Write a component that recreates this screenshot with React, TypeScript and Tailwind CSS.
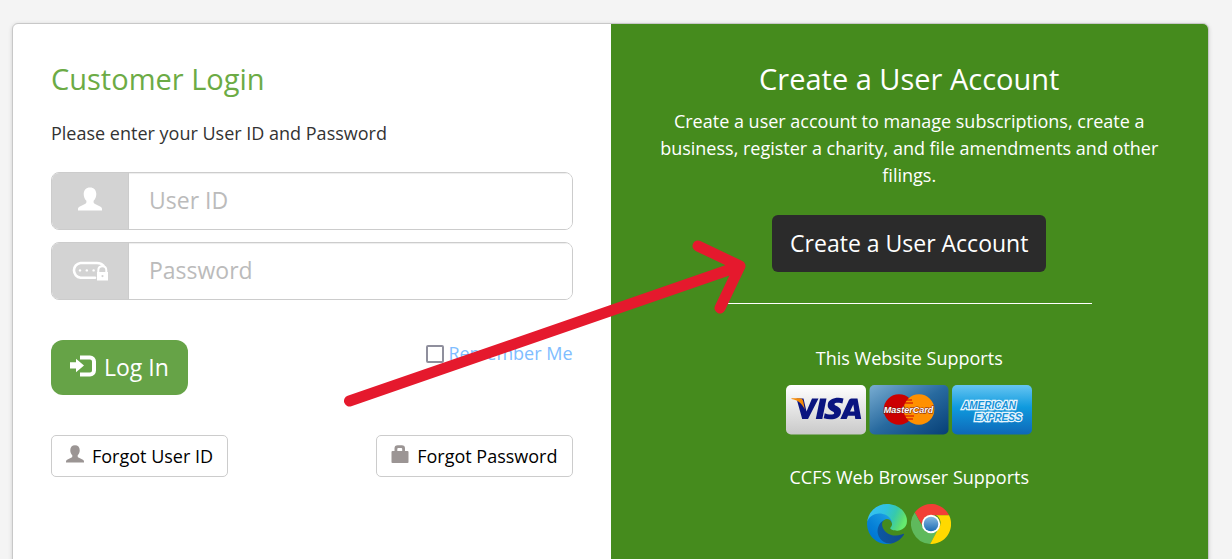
import React from "react";

type IconProps = { className?: string };

function UserIcon({ className }: IconProps) {
  return (
    <svg viewBox="0 0 24 24" className={className} fill="currentColor" aria-hidden="true">
      <path d="M12 0.4C15.9 0.4 18.3 3 18.3 7C18.3 9.6 17.300 12.300 15.600 13.800V15.200C15.600 15.900 15.900 16.300 16.600 16.700L22.600 19.800C23.500 20.300 24 21 24 22V23.400H0V22C0 21 0.500 20.300 1.400 19.800L7.400 16.700C8.100 16.300 8.400 15.900 8.400 15.200V13.800C6.700 12.300 5.700 9.600 5.700 7C5.700 3 8.100 0.400 12 0.400Z" />
    </svg>
  );
}

function PasswordIcon({ className }: IconProps) {
  return (
    <svg viewBox="0 0 36 20" className={className} fill="none" aria-hidden="true">
      <path
        d="M23 16.700H8.500A7.400 7.400 0 0 1 8.500 2H25C28 2 30 3.100 31.400 4.700"
        stroke="currentColor"
        strokeWidth="2.600"
        strokeLinecap="round"
      />
      <circle cx="8" cy="9.400" r="1.200" fill="currentColor" />
      <circle cx="14.800" cy="9.400" r="1.200" fill="currentColor" />
      <circle cx="21.600" cy="9.400" r="1.200" fill="currentColor" />
      <path d="M26.300 11V9.200C26.300 6.800 28 5.200 30.300 5.200S34.300 6.800 34.300 9.200V11" stroke="currentColor" strokeWidth="2" />
      <path
        fillRule="evenodd"
        d="M25 11H36V19.400H25V11ZM30.500 14A1.100 1.100 0 1 0 30.500 16.200A1.100 1.100 0 1 0 30.500 14Z"
        fill="currentColor"
      />
    </svg>
  );
}

function LogInIcon({ className }: IconProps) {
  return (
    <svg viewBox="0 0 26 22" className={className} fill="currentColor" aria-hidden="true">
      <path d="M10 0.500H20A6 6 0 0 1 26 6.500V15.500A6 6 0 0 1 20 21.500H10V17.500H20A2 2 0 0 0 22 15.500V6.500A2 2 0 0 0 20 4.500H10Z" />
      <path d="M0 7.300H6V3.800L14 10.500L6 17.200V13.500H0Z" />
    </svg>
  );
}

function LockIcon({ className }: IconProps) {
  return (
    <svg viewBox="0 0 18 18" className={className} fill="currentColor" aria-hidden="true">
      <path
        fillRule="evenodd"
        d="M3.500 6V3.500A3.200 3.200 0 0 1 6.700 0.300H10.800A3.200 3.200 0 0 1 14 3.500V6H16.500Q17.500 6 17.500 7V17.200Q17.500 18 16.500 18H1.500Q0.500 18 0.500 17.200V7Q0.500 6 1.500 6ZM6.300 6H11.200V4Q11.200 3 10.200 3H7.300Q6.300 3 6.300 4Z"
      />
    </svg>
  );
}

function VisaLogo() {
  return (
    <svg viewBox="0 0 80 50" className="h-[50px] w-20" role="img" aria-label="Visa">
      <defs>
        <linearGradient id="visa-bg" x1="0" y1="0" x2="0" y2="1">
          <stop offset="0" stopColor="#fff" />
          <stop offset="1" stopColor="#c9c9c9" />
        </linearGradient>
      </defs>
      <rect width="80" height="49.500" rx="5" fill="url(#visa-bg)" />
      <path fill="#0a1480" d="M10.500 13.500H17.500L20.500 26.500L26 13.500H32.500L22 34H16.200Z" />
      <path fill="#0a1480" d="M34 13.500H40.500L36.300 34H29.800Z" />
      <path
        fill="#0a1480"
        d="M57.500 13.600L56.400 18.600C54.500 17.800 48.600 17.100 48.400 19.300C48.300 21 55.700 21.600 55 27.300C54.200 34.700 44.500 35.500 37.700 33.300L38.800 28.300C41.200 29.500 47.600 30.500 48.200 28.200C48.500 26.200 41.300 25.600 41.700 20C42.200 13.100 51.500 11.800 57.500 13.600Z"
      />
      <path
        fill="#0a1480"
        fillRule="evenodd"
        d="M65.300 13.500H71.500L75.200 34H69.300L68.800 30.800H62L60.600 34H54.300L62.800 15.300Q63.600 13.500 65.300 13.500ZM67.300 19.500L64 26.600H68.400Z"
      />
      <path fill="#f58a07" d="M5.500 13.300H13.500Q16.500 13.300 17.200 16.300L18.800 24.500C16.500 19 12 15.300 5.500 14.100Z" />
    </svg>
  );
}

function MasterCardLogo() {
  return (
    <svg viewBox="0 0 80 50" className="h-[50px] w-20" role="img" aria-label="MasterCard">
      <defs>
        <linearGradient id="mc-bg" x1="0" y1="0" x2="1" y2="1">
          <stop offset="0" stopColor="#79add2" />
          <stop offset="0.500" stopColor="#286a9f" />
          <stop offset="1" stopColor="#063f76" />
        </linearGradient>
      </defs>
      <rect x="0.500" width="79" height="49.500" rx="5" fill="url(#mc-bg)" />
      <circle cx="30" cy="24.500" r="15.300" fill="#cc0000" />
      <circle cx="50" cy="24.500" r="15.300" fill="#ff9000" />
      <path d="M37 15H43M36 18H44M36 31H45M37 34H44" stroke="#cc0000" strokeWidth="1.200" />
      <text
        x="39.500"
        y="28"
        textAnchor="middle"
        fontFamily="Liberation Sans Narrow, Liberation Sans, sans-serif"
        fontSize="9"
        fontWeight="700"
        fontStyle="italic"
        fill="#fff"
        stroke="#7a1c10"
        strokeWidth="1"
        paintOrder="stroke"
      >
        MasterCard
      </text>
    </svg>
  );
}

function AmexLogo() {
  return (
    <svg viewBox="0 0 80 50" className="h-[50px] w-20" role="img" aria-label="American Express">
      <defs>
        <linearGradient id="amex-bg" x1="0" y1="0" x2="0" y2="1">
          <stop offset="0" stopColor="#66c5f2" />
          <stop offset="0.450" stopColor="#0f9ade" />
          <stop offset="1" stopColor="#0e68b8" />
        </linearGradient>
      </defs>
      <rect width="80" height="49.500" rx="5" fill="url(#amex-bg)" />
      <g
        fontFamily="Liberation Sans, sans-serif"
        fontWeight="700"
        fontStyle="italic"
        fontSize="10"
        fill="#1591d8"
        stroke="#e8f6fd"
        strokeWidth="2.500"
        paintOrder="stroke"
        textAnchor="middle"
      >
        <text x="37" y="23.500">
          AMERICAN
        </text>
        <text x="46" y="35.500">
          EXPRESS
        </text>
      </g>
    </svg>
  );
}

function EdgeLogo() {
  return (
    <svg viewBox="0 0 256 256" className="size-10" role="img" aria-label="Microsoft Edge">
      <defs>
        <linearGradient id="edge-a" x1="63" y1="177" x2="241" y2="177" gradientUnits="userSpaceOnUse">
          <stop offset="0" stopColor="#0c59a4" />
          <stop offset="1" stopColor="#114a8b" />
        </linearGradient>
        <linearGradient id="edge-b" x1="157" y1="100" x2="46" y2="221" gradientUnits="userSpaceOnUse">
          <stop offset="0" stopColor="#1b9de2" />
          <stop offset="0.160" stopColor="#1595df" />
          <stop offset="0.670" stopColor="#0680d7" />
          <stop offset="1" stopColor="#0078d4" />
        </linearGradient>
        <linearGradient id="edge-c" x1="40" y1="40" x2="240" y2="130" gradientUnits="userSpaceOnUse">
          <stop offset="0" stopColor="#35c1f1" />
          <stop offset="0.350" stopColor="#2fc2df" />
          <stop offset="0.650" stopColor="#36c9ad" />
          <stop offset="0.900" stopColor="#5bdc75" />
          <stop offset="1" stopColor="#66eb6e" />
        </linearGradient>
      </defs>
      <g transform="translate(-4.630 -4.920)">
        <path
          fill="url(#edge-a)"
          d="M235.680 195.460a93.730 93.730 0 0 1-10.540 4.710 101.870 101.870 0 0 1-35.900 6.460c-47.320 0-88.540-32.550-88.540-74.320A31.480 31.480 0 0 1 117.130 105c-42.800 1.800-53.800 46.400-53.800 72.530 0 73.880 68.090 81.370 82.760 81.370 7.910 0 19.840-2.300 27-4.560l1.310-.44a128.340 128.340 0 0 0 66.600-52.800 4 4 0 0 0-5.320-5.640Z"
        />
        <path
          fill="url(#edge-b)"
          d="M110.340 246.340A79.200 79.200 0 0 1 87.600 225a80.720 80.720 0 0 1 29.530-120c3.120-1.470 8.450-4.130 15.540-4a32.350 32.350 0 0 1 25.690 13 31.880 31.880 0 0 1 6.360 18.660c0-.21 24.460-79.600-80-79.600-43.900 0-80 41.660-80 78.210a130.150 130.150 0 0 0 12.110 56 128 128 0 0 0 156.380 67.110 75.550 75.550 0 0 1-62.780-8Z"
        />
        <path
          fill="url(#edge-c)"
          d="M156.940 153.780c-.81 1.050-3.300 2.500-3.300 5.660 0 2.610 1.700 5.120 4.720 7.230 14.380 10 41.490 8.680 41.560 8.680a59.560 59.560 0 0 0 30.270-8.350 61.380 61.380 0 0 0 30.430-52.880c.26-22.410-8-37.310-11.340-43.910C228.090 28.760 182.350 4.920 132.610 4.920a128 128 0 0 0-128 126.200c.48-36.540 36.800-66.050 80-66.050 3.500 0 23.460.34 42 10.070 16.340 8.580 24.900 18.940 30.850 29.210 6.180 10.670 7.280 24.150 7.280 29.520 0 5.370-2.740 13.330-7.800 19.910Z"
        />
      </g>
    </svg>
  );
}

function ChromeLogo() {
  return (
    <svg viewBox="0 0 48 48" className="size-10" role="img" aria-label="Google Chrome">
      <defs>
        <linearGradient id="chrome-center" x1="0" y1="0" x2="0" y2="1">
          <stop offset="0" stopColor="#86b9e0" />
          <stop offset="1" stopColor="#1d6cb5" />
        </linearGradient>
      </defs>
      <path fill="#f23f36" d="M4.500 10.200A24 24 0 0 1 45.700 13.500H24A10.500 10.500 0 0 0 14 21L13 25Z" />
      <path fill="#5fb95c" d="M4.500 10.200A24 24 0 0 0 23 48L33 30L24 34.500A10.500 10.500 0 0 1 14.500 28.500Z" />
      <path fill="#ffd900" d="M45.700 13.500A24 24 0 0 1 23 48L33 29.500A10.500 10.500 0 0 0 30 13.500Z" />
      <circle cx="24" cy="24" r="11" fill="#fff" />
      <circle cx="24" cy="24" r="8.800" fill="url(#chrome-center)" />
    </svg>
  );
}

function Arrow() {
  return (
    <svg
      viewBox="0 0 412 176"
      className="pointer-events-none absolute top-[235px] left-[341px] h-[176px] w-[412px]"
      fill="none"
      stroke="#e5192d"
      strokeWidth="11"
      strokeLinecap="round"
      strokeLinejoin="round"
      aria-hidden="true"
    >
      <path d="M8.500 166L399 31M357 11L399 31L379 73" />
    </svg>
  );
}

type FieldProps = {
  id: string;
  type: string;
  label: string;
  children: React.ReactNode;
};

function Field({ id, type, label, children }: FieldProps) {
  return (
    <div className="flex h-[58px] overflow-hidden rounded-lg border border-[#ccc]">
      <label
        htmlFor={id}
        aria-label={label}
        className="flex w-[77px] shrink-0 items-center justify-center border-r border-[#ccc] bg-[#d3d3d3] text-white"
      >
        {children}
      </label>
      <input
        id={id}
        type={type}
        placeholder={label}
        className="w-full min-w-0 bg-white px-5 text-[23px] shadow-[inset_0_1px_1px_rgba(0,0,0,0.075)] outline-none placeholder:text-[#bbb]"
      />
    </div>
  );
}

export default function App() {
  return (
    <div className="relative min-h-screen bg-[#f4f4f4] pt-[23px] pr-[23px] pl-3 font-['Open_Sans',sans-serif] text-lg text-[#333]">
      <main className="grid grid-cols-2 overflow-hidden rounded-md border border-[#c8c8c8] bg-white shadow-[0_1px_4px_rgba(0,0,0,0.15)]">
        <form className="px-[38px] pt-[35px]" onSubmit={(e) => e.preventDefault()}>
          <h1 className="text-[29px] leading-10 font-medium text-[#6cab45]">Customer Login</h1>
          <p className="mt-5 leading-7">Please enter your User ID and Password</p>
          <div className="mt-[25px] flex flex-col gap-3">
            <Field id="user-id" type="text" label="User ID">
              <UserIcon className="mb-1 size-6" />
            </Field>
            <Field id="password" type="password" label="Password">
              <PasswordIcon className="h-5 w-9" />
            </Field>
          </div>
          <div className="mt-10 flex items-start justify-between">
            <button
              type="submit"
              className="flex h-[55px] items-center gap-2 rounded-xl bg-[#66a347] px-[19px] text-[23px] text-white"
            >
              <LogInIcon className="mb-1 h-[22px] w-[26px]" />
              Log In
            </button>
            <label className="flex items-center gap-1 leading-[27px] text-[#80bdff]">
              <input
                type="checkbox"
                className="size-[18px] appearance-none rounded-xs border-2 border-[#8f8f9d] bg-white"
              />
              Remember Me
            </label>
          </div>
          <div className="mt-10 flex justify-between">
            <button
              type="button"
              className="flex h-[42px] items-center gap-2 rounded-[5px] border border-[#ccc] px-[14px] text-black"
            >
              <UserIcon className="mb-1 size-[18px] text-[#9b9594]" />
              Forgot User ID
            </button>
            <button
              type="button"
              className="flex h-[42px] items-center gap-2 rounded-[5px] border border-[#ccc] px-[14px] text-black"
            >
              <LockIcon className="mb-1 size-[18px] text-[#9b9594]" />
              Forgot Password
            </button>
          </div>
        </form>
        <section className="flex flex-col items-center bg-[#458b1d] px-12 pt-[35px] pb-10 text-center text-white">
          <h2 className="text-[29px] leading-10 font-medium">Create a User Account</h2>
          <p className="mt-[9px] leading-[27px]">
            Create a user account to manage subscriptions, create a business, register a charity, and file amendments
            and other filings.
          </p>
          <button type="button" className="mt-[26px] h-[57px] rounded-md bg-[#2b2b2b] px-[18px] text-[23px]">
            Create a User Account
          </button>
          <hr className="mt-[31px] w-[366px] border-t border-white" />
          <h3 className="mt-10 leading-7">This Website Supports</h3>
          <div className="mt-[13px] flex gap-[3px]">
            <VisaLogo />
            <MasterCardLogo />
            <AmexLogo />
          </div>
          <h3 className="mt-7 leading-7">CCFS Web Browser Supports</h3>
          <div className="mt-[13px] flex gap-1">
            <EdgeLogo />
            <ChromeLogo />
          </div>
        </section>
      </main>
      <Arrow />
    </div>
  );
}
